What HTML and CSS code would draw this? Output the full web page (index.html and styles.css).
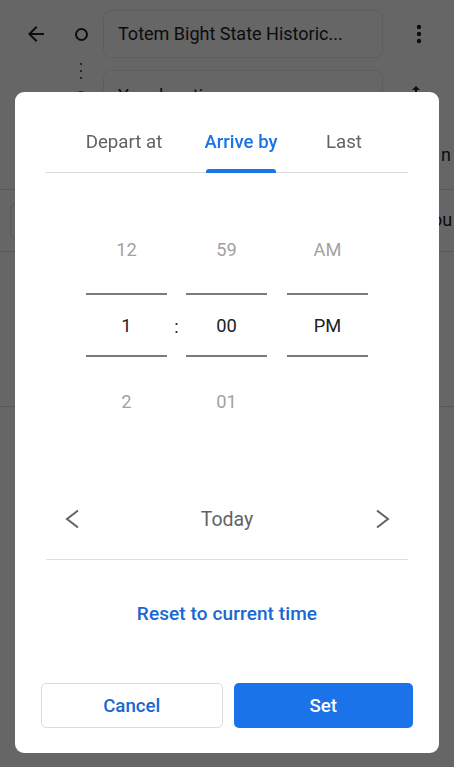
FILE: index.html
```html
<!DOCTYPE html>
<html>
<head>
<meta charset="utf-8">
<link rel="stylesheet" href="styles.css">
</head>
<body>
<div class="app">
  <div class="search-row">
    <svg class="back" width="24" height="24" viewBox="0 0 24 24"><path d="M20 11H7.83l5.59-5.59L12 4l-8 8 8 8 1.41-1.41L7.83 13H20v-2z" fill="#202124"/></svg>
    <div class="marker"><span class="ring"></span></div>
    <div class="field">Totem Bight State Historic...</div>
    <svg class="more" width="24" height="24" viewBox="0 0 24 24"><circle cx="12" cy="5" r="2.2" fill="#202124"/><circle cx="12" cy="12" r="2.2" fill="#202124"/><circle cx="12" cy="19" r="2.2" fill="#202124"/></svg>
  </div>
  <div class="search-row second">
    <div class="back-space"></div>
    <div class="marker"><span class="dots"></span><span class="bluedot"></span></div>
    <div class="field">Your location</div>
    <svg class="more swap" width="24" height="24" viewBox="0 0 24 24"><path d="M16 17.01V10h-2v7.01h-3L15 21l4-3.99h-3zM9 3L5 6.99h3V14h2V6.99h3L9 3z" fill="#202124"/></svg>
  </div>
  <div class="mode-row"><span>n</span></div>
  <div class="chip-row">
    <span class="chip"></span>
    <span class="chip right">ou</span>
  </div>
  <div class="results"></div>
</div>

<div class="scrim"></div>

<div class="dialog">
  <div class="tabs">
    <div class="tab t1">Depart at</div>
    <div class="tab t2 active">Arrive by</div>
    <div class="tab t3">Last</div>
  </div>

  <div class="picker">
    <div class="col">
      <div class="cell top">12</div>
      <div class="cell mid">1</div>
      <div class="cell bot">2</div>
    </div>
    <div class="sep">:</div>
    <div class="col">
      <div class="cell top">59</div>
      <div class="cell mid">00</div>
      <div class="cell bot">01</div>
    </div>
    <div class="gap"></div>
    <div class="col">
      <div class="cell top">AM</div>
      <div class="cell mid">PM</div>
      <div class="cell bot"></div>
    </div>
  </div>

  <div class="date-row">
    <svg width="24" height="24" viewBox="0 0 24 24"><polyline points="18,3.5 7,12 18,20.5" fill="none" stroke="#5f6368" stroke-width="2"/></svg>
    <span class="date">Today</span>
    <svg width="24" height="24" viewBox="0 0 24 24"><polyline points="7,3.5 18,12 7,20.5" fill="none" stroke="#5f6368" stroke-width="2"/></svg>
  </div>
  <div class="divider"></div>

  <div class="reset">Reset to current time</div>

  <div class="actions">
    <button class="btn cancel">Cancel</button>
    <button class="btn set">Set</button>
  </div>
</div>
</body>
</html>
```

FILE: styles.css
```css
* { box-sizing: border-box; }
html, body {
  margin: 0;
  padding: 0;
  width: 454px;
  height: 767px;
  overflow: hidden;
  background: #ffffff;
  font-family: Roboto, "Noto Sans", Arial, sans-serif;
  color: #202124;
}

/* ---------- background page ---------- */
.app {
  width: 454px;
  height: 767px;
  background: #ffffff;
  overflow: hidden;
}
.search-row {
  display: flex;
  align-items: center;
  height: 58px;
  padding-top: 10px;
}
.search-row.second {
  height: 60px;
  padding-top: 12px;
}
.back {
  margin-left: 24px;
  flex: none;
}
.back-space {
  width: 48px;
  flex: none;
}
.marker {
  width: 55px;
  height: 48px;
  padding-left: 11px;
  display: flex;
  flex-direction: column;
  align-items: center;
  justify-content: center;
  flex: none;
}
.ring {
  width: 13px;
  height: 13px;
  border: 2px solid #202124;
  border-radius: 50%;
}
.dots {
  width: 2px;
  height: 18px;
  margin-top: -22px;
  background: repeating-linear-gradient(#5f6368 0 2px, transparent 2px 7px);
}
.bluedot {
  width: 14px;
  height: 14px;
  border-radius: 50%;
  background: #1a73e8;
  border: 2px solid #fff;
  margin-top: 8px;
}
.field {
  width: 280px;
  height: 48px;
  border: 1px solid #e8eaed;
  border-radius: 8px;
  background: #fff;
  font-size: 18px;
  line-height: 46px;
  padding-left: 14px;
  white-space: nowrap;
  overflow: hidden;
  flex: none;
}
.search-row.second .field { line-height: 50px; }
.more {
  margin-left: 24px;
  flex: none;
}
.more.swap { margin-top: 2px; }
.mode-row {
  height: 72px;
  border-bottom: 1px solid #dadce0;
  display: flex;
  justify-content: flex-end;
  align-items: center;
  padding-right: 3px;
  padding-top: 2px;
  font-size: 18px;
}
.chip-row {
  height: 62px;
  display: flex;
  align-items: center;
  justify-content: space-between;
  border-bottom: 1px solid #dadce0;
}
.chip {
  height: 38px;
  width: 120px;
  border: 1px solid #dadce0;
  border-radius: 8px;
  font-size: 18px;
  line-height: 36px;
  margin-left: 10px;
}
.chip.right {
  margin-left: 0;
  width: 22px;
  border: none;
  border-radius: 0;
  white-space: nowrap;
  overflow: visible;
}
.results {
  height: 155px;
  border-bottom: 1px solid #dadce0;
}

/* ---------- scrim ---------- */
.scrim {
  position: fixed;
  inset: 0;
  background: rgba(0, 0, 0, 0.6);
}

/* ---------- dialog ---------- */
.dialog {
  position: absolute;
  top: 92px;
  left: 15px;
  width: 424px;
  background: #ffffff;
  border-radius: 9px;
  padding-bottom: 25px;
}
.tabs {
  display: flex;
  margin: 0 31px;
  height: 81px;
  border-bottom: 1px solid #dadce0;
}
.tab {
  position: relative;
  display: flex;
  align-items: flex-end;
  justify-content: center;
  padding-bottom: 19px;
  font-size: 18.7px;
  line-height: 22px;
  color: #5f6368;
  white-space: nowrap;
}
.t1 { width: 156px; }
.t2 { width: 78px; }
.t3 { width: 128px; }
.tab.active {
  color: #1a73e8;
  font-weight: 500;
  font-size: 18.5px;
}
.tab.active::after {
  content: "";
  position: absolute;
  left: 50%;
  bottom: -1px;
  width: 70px;
  margin-left: -35px;
  height: 4px;
  border-radius: 3px 3px 0 0;
  background: #1a73e8;
}

.picker {
  display: flex;
  justify-content: center;
  margin-top: 33px;
}
.col {
  width: 81px;
  display: flex;
  flex-direction: column;
}
.sep {
  width: 19px;
  display: flex;
  align-items: center;
  justify-content: center;
  font-size: 18px;
  color: #202124;
}
.gap { width: 20px; }
.cell {
  display: flex;
  align-items: center;
  justify-content: center;
  font-size: 18.3px;
  color: #a2a2a2;
}
.cell.top { height: 87px; }
.cell.mid {
  height: 64px;
  border-top: 2px solid #7b7b7b;
  border-bottom: 2px solid #7b7b7b;
  color: #202124;
}
.cell.bot { height: 89px; }

.date-row {
  margin: 43px 45px 0;
  height: 60px;
  display: flex;
  align-items: center;
  justify-content: space-between;
}
.date {
  font-size: 19.5px;
  color: #5f6368;
}
.divider {
  margin: 10px 31px 0;
  height: 1px;
  background: #e0e0e0;
}

.reset {
  margin-top: 40px;
  height: 28px;
  line-height: 28px;
  text-align: center;
  font-size: 19px;
  font-weight: 500;
  color: #1967d2;
  letter-spacing: 0.1px;
}

.actions {
  display: flex;
  gap: 11px;
  margin-top: 55px;
  padding: 0 26px;
}
.btn {
  flex: 1;
  height: 45px;
  border-radius: 5px;
  font-family: Roboto, "Noto Sans", Arial, sans-serif;
  font-size: 18.7px;
  font-weight: 500;
  cursor: pointer;
}
.cancel {
  background: #ffffff;
  border: 1px solid #dadce0;
  color: #1967d2;
}
.set {
  background: #1a73e8;
  border: none;
  color: #ffffff;
}
```
